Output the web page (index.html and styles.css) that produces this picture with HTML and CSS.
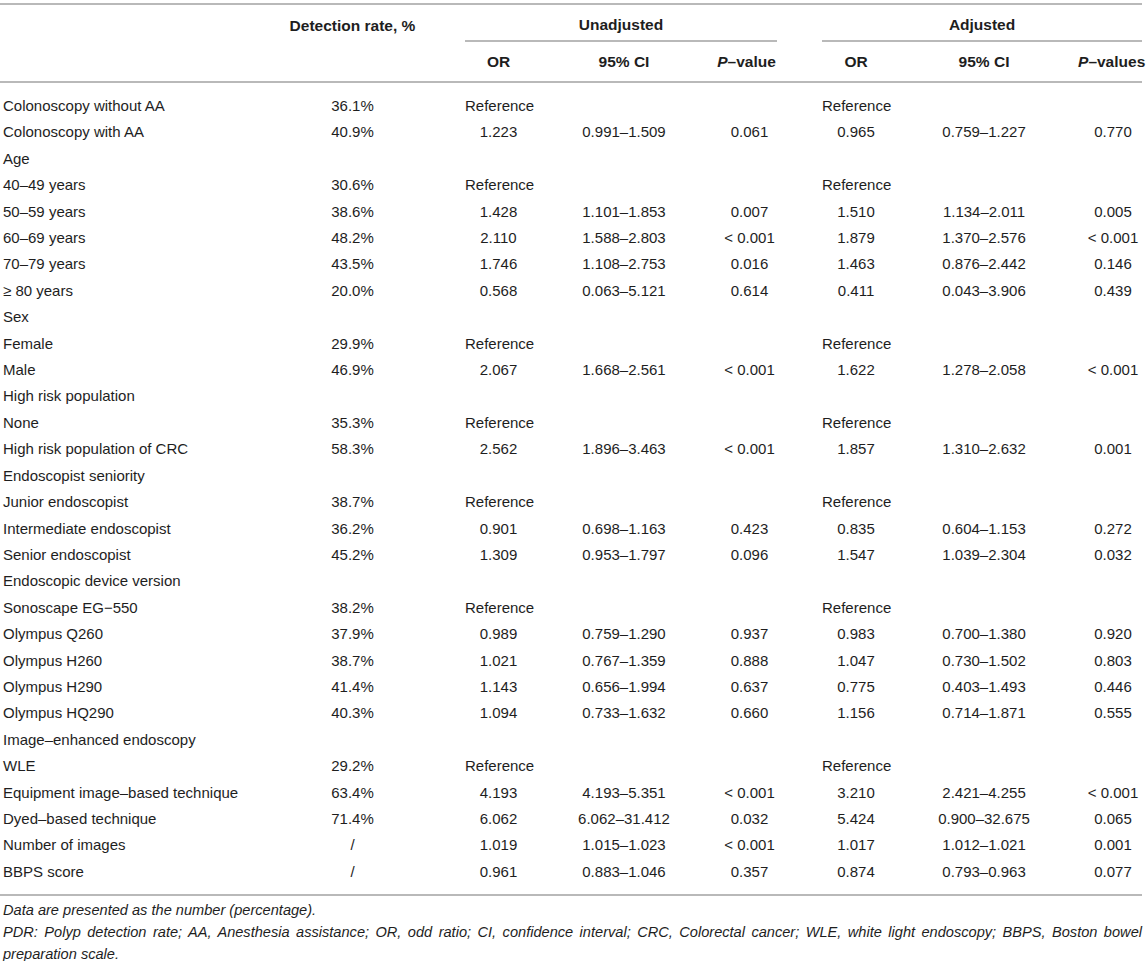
FILE: index.html
```html
<!DOCTYPE html>
<html lang="en">
<head>
<meta charset="utf-8">
<title>Polyp detection rate table</title>
<link rel="stylesheet" href="styles.css">
</head>
<body>
<div class="page">
<table class="data">
  <colgroup>
    <col class="c-label"><col class="c-det"><col class="c-or"><col class="c-ci"><col class="c-p"><col class="c-gap"><col class="c-or2"><col class="c-ci2"><col class="c-p2">
  </colgroup>
  <thead>
    <tr class="h1">
      <th></th>
      <th>Detection rate, %</th>
      <th colspan="3" class="group">Unadjusted</th>
      <th></th>
      <th colspan="3" class="group">Adjusted</th>
    </tr>
    <tr class="h2">
      <th></th>
      <th></th>
      <th>OR</th>
      <th>95% CI</th>
      <th><i>P</i>–value</th>
      <th></th>
      <th>OR</th>
      <th>95% CI</th>
      <th class="last"><i>P</i>–values</th>
    </tr>
  </thead>
  <tbody>
    <tr><td class="lbl">Colonoscopy without AA</td><td>36.1%</td><td>Reference</td><td></td><td></td><td></td><td>Reference</td><td></td><td></td></tr>
    <tr><td class="lbl">Colonoscopy with AA</td><td>40.9%</td><td>1.223</td><td>0.991–1.509</td><td class="pv">0.061</td><td></td><td>0.965</td><td>0.759–1.227</td><td class="pv">0.770</td></tr>
    <tr><td class="lbl">Age</td><td></td><td></td><td></td><td></td><td></td><td></td><td></td><td></td></tr>
    <tr><td class="lbl">40–49 years</td><td>30.6%</td><td>Reference</td><td></td><td></td><td></td><td>Reference</td><td></td><td></td></tr>
    <tr><td class="lbl">50–59 years</td><td>38.6%</td><td>1.428</td><td>1.101–1.853</td><td class="pv">0.007</td><td></td><td>1.510</td><td>1.134–2.011</td><td class="pv">0.005</td></tr>
    <tr><td class="lbl">60–69 years</td><td>48.2%</td><td>2.110</td><td>1.588–2.803</td><td class="pv">&lt; 0.001</td><td></td><td>1.879</td><td>1.370–2.576</td><td class="pv">&lt; 0.001</td></tr>
    <tr><td class="lbl">70–79 years</td><td>43.5%</td><td>1.746</td><td>1.108–2.753</td><td class="pv">0.016</td><td></td><td>1.463</td><td>0.876–2.442</td><td class="pv">0.146</td></tr>
    <tr><td class="lbl">≥ 80 years</td><td>20.0%</td><td>0.568</td><td>0.063–5.121</td><td class="pv">0.614</td><td></td><td>0.411</td><td>0.043–3.906</td><td class="pv">0.439</td></tr>
    <tr><td class="lbl">Sex</td><td></td><td></td><td></td><td></td><td></td><td></td><td></td><td></td></tr>
    <tr><td class="lbl">Female</td><td>29.9%</td><td>Reference</td><td></td><td></td><td></td><td>Reference</td><td></td><td></td></tr>
    <tr><td class="lbl">Male</td><td>46.9%</td><td>2.067</td><td>1.668–2.561</td><td class="pv">&lt; 0.001</td><td></td><td>1.622</td><td>1.278–2.058</td><td class="pv">&lt; 0.001</td></tr>
    <tr><td class="lbl">High risk population</td><td></td><td></td><td></td><td></td><td></td><td></td><td></td><td></td></tr>
    <tr><td class="lbl">None</td><td>35.3%</td><td>Reference</td><td></td><td></td><td></td><td>Reference</td><td></td><td></td></tr>
    <tr><td class="lbl">High risk population of CRC</td><td>58.3%</td><td>2.562</td><td>1.896–3.463</td><td class="pv">&lt; 0.001</td><td></td><td>1.857</td><td>1.310–2.632</td><td class="pv">0.001</td></tr>
    <tr><td class="lbl">Endoscopist seniority</td><td></td><td></td><td></td><td></td><td></td><td></td><td></td><td></td></tr>
    <tr><td class="lbl">Junior endoscopist</td><td>38.7%</td><td>Reference</td><td></td><td></td><td></td><td>Reference</td><td></td><td></td></tr>
    <tr><td class="lbl">Intermediate endoscopist</td><td>36.2%</td><td>0.901</td><td>0.698–1.163</td><td class="pv">0.423</td><td></td><td>0.835</td><td>0.604–1.153</td><td class="pv">0.272</td></tr>
    <tr><td class="lbl">Senior endoscopist</td><td>45.2%</td><td>1.309</td><td>0.953–1.797</td><td class="pv">0.096</td><td></td><td>1.547</td><td>1.039–2.304</td><td class="pv">0.032</td></tr>
    <tr><td class="lbl">Endoscopic device version</td><td></td><td></td><td></td><td></td><td></td><td></td><td></td><td></td></tr>
    <tr><td class="lbl">Sonoscape EG−550</td><td>38.2%</td><td>Reference</td><td></td><td></td><td></td><td>Reference</td><td></td><td></td></tr>
    <tr><td class="lbl">Olympus Q260</td><td>37.9%</td><td>0.989</td><td>0.759–1.290</td><td class="pv">0.937</td><td></td><td>0.983</td><td>0.700–1.380</td><td class="pv">0.920</td></tr>
    <tr><td class="lbl">Olympus H260</td><td>38.7%</td><td>1.021</td><td>0.767–1.359</td><td class="pv">0.888</td><td></td><td>1.047</td><td>0.730–1.502</td><td class="pv">0.803</td></tr>
    <tr><td class="lbl">Olympus H290</td><td>41.4%</td><td>1.143</td><td>0.656–1.994</td><td class="pv">0.637</td><td></td><td>0.775</td><td>0.403–1.493</td><td class="pv">0.446</td></tr>
    <tr><td class="lbl">Olympus HQ290</td><td>40.3%</td><td>1.094</td><td>0.733–1.632</td><td class="pv">0.660</td><td></td><td>1.156</td><td>0.714–1.871</td><td class="pv">0.555</td></tr>
    <tr><td class="lbl">Image–enhanced endoscopy</td><td></td><td></td><td></td><td></td><td></td><td></td><td></td><td></td></tr>
    <tr><td class="lbl">WLE</td><td>29.2%</td><td>Reference</td><td></td><td></td><td></td><td>Reference</td><td></td><td></td></tr>
    <tr><td class="lbl">Equipment image–based technique</td><td>63.4%</td><td>4.193</td><td>4.193–5.351</td><td class="pv">&lt; 0.001</td><td></td><td>3.210</td><td>2.421–4.255</td><td class="pv">&lt; 0.001</td></tr>
    <tr><td class="lbl">Dyed–based technique</td><td>71.4%</td><td>6.062</td><td>6.062–31.412</td><td class="pv">0.032</td><td></td><td>5.424</td><td>0.900–32.675</td><td class="pv">0.065</td></tr>
    <tr><td class="lbl">Number of images</td><td>/</td><td>1.019</td><td>1.015–1.023</td><td class="pv">&lt; 0.001</td><td></td><td>1.017</td><td>1.012–1.021</td><td class="pv">0.001</td></tr>
    <tr><td class="lbl">BBPS score</td><td>/</td><td>0.961</td><td>0.883–1.046</td><td class="pv">0.357</td><td></td><td>0.874</td><td>0.793–0.963</td><td class="pv">0.077</td></tr>
  </tbody>
</table>
<div class="notes">
  <p>Data are presented as the number (percentage).</p>
  <p class="just">PDR: Polyp detection rate; AA, Anesthesia assistance; OR, odd ratio; CI, confidence interval; CRC, Colorectal cancer; WLE, white light endoscopy; BBPS, Boston bowel preparation scale.</p>
</div>
</div>
</body>
</html>
```

FILE: styles.css
```css
html, body {
  margin: 0;
  padding: 0;
  background: #ffffff;
}

.page {
  width: 1142px;
  padding-top: 3px;
  font-family: "Liberation Sans", Arial, sans-serif;
  color: #1e1e1e;
}

.data {
  width: 1142px;
  table-layout: fixed;
  border-collapse: collapse;
  border-top: 2px solid #b9b9b9;
  border-bottom: 2px solid #b9b9b9;
  font-size: 15px;
}

.c-label { width: 240px; }
.c-det { width: 225px; }
.c-or { width: 67px; }
.c-ci { width: 184px; }
.c-p { width: 61px; }
.c-gap { width: 45px; }
.c-or2 { width: 68px; }
.c-ci2 { width: 188px; }
.c-p2 { width: 64px; }

.data th,
.data td {
  padding: 0;
  text-align: center;
  white-space: nowrap;
  vertical-align: middle;
}

.data th {
  font-weight: bold;
  font-size: 15.5px;
  line-height: 21px;
}

.data th i {
  font-style: italic;
}

.data th.last {
  text-align: right;
}

.h1 th {
  padding-top: 9px;
  padding-bottom: 5px;
}

.h1 th.group {
  border-bottom: 2px solid #b9b9b9;
}

.h2 th {
  padding-top: 9px;
  padding-bottom: 9px;
  border-bottom: 2px solid #b9b9b9;
}

.data td {
  height: 26.4px;
  line-height: 26.4px;
}

.data td.lbl {
  text-align: left;
  padding-left: 3px;
}

.data td.pv {
  padding-left: 6px;
}

.data tbody tr:first-child td {
  padding-top: 10px;
}

.data tbody tr:last-child td {
  padding-bottom: 9px;
}

.notes {
  padding: 3px 0 0 3px;
  font-size: 14.6px;
  font-style: italic;
  line-height: 22px;
}

.notes p {
  margin: 0;
}

.notes .just {
  text-align: justify;
}
```
